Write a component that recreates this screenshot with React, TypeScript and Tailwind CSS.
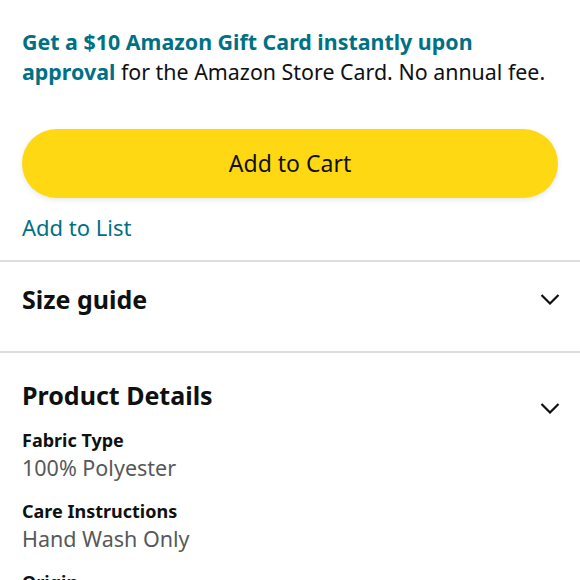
const font = { fontFamily: '"Noto Sans", "Open Sans", Arial, sans-serif' };

function Chevron() {
  return (
    <svg width="20" height="12" viewBox="0 0 20 12" fill="none" className="shrink-0">
      <path d="M1.5 2l8.5 8.5L18.5 2" stroke="#0F1111" strokeWidth="2.2" />
    </svg>
  );
}

function Detail({ label, value }: { label: string; value?: string }) {
  return (
    <div className="mt-[15px]">
      <div className="text-[18px] leading-[26px] font-bold text-[#0F1111]">{label}</div>
      {value && <div className="text-[21.5px] leading-[30px] text-[#565959]">{value}</div>}
    </div>
  );
}

export default function App() {
  return (
    <div className="w-[580px] h-[580px] overflow-hidden bg-white text-[#0F1111]" style={font}>
      <div className="px-[22px] pt-[27px]">
        <p className="text-[21.4px] leading-[30px]">
          <span className="font-bold text-[#007185]">
            Get a $10 Amazon Gift Card instantly upon
            <br />
            approval
          </span>{" "}
          for the Amazon Store Card. No annual fee.
        </p>
        <button className="mt-[42px] w-full h-[69px] rounded-full bg-[#FFD814] text-[23px] text-[#0F1111] shadow-[0_2px_5px_rgba(213,217,217,0.6)]">
          Add to Cart
        </button>
        <div className="mt-[14px] text-[22px] leading-[30px] text-[#007185]">Add to List</div>
      </div>

      <div className="mt-[18px] border-t-2 border-[#DDDDDD]" />
      <div className="flex items-center justify-between pl-[22px] pr-[20px] pt-[21px] pb-[36px]">
        <h2 className="text-[25px] leading-[32px] font-bold">Size guide</h2>
        <Chevron />
      </div>
      <div className="border-t-2 border-[#DDDDDD]" />

      <div className="pl-[22px] pr-[20px] pt-[25px]">
        <div className="flex items-end justify-between">
          <h2 className="text-[25px] leading-[34px] font-bold">Product Details</h2>
          <div className="mb-[-2px]">
            <Chevron />
          </div>
        </div>
        <Detail label="Fabric Type" value="100% Polyester" />
        <Detail label="Care Instructions" value="Hand Wash Only" />
        <Detail label="Origin" value="Imported" />
      </div>
    </div>
  );
}
